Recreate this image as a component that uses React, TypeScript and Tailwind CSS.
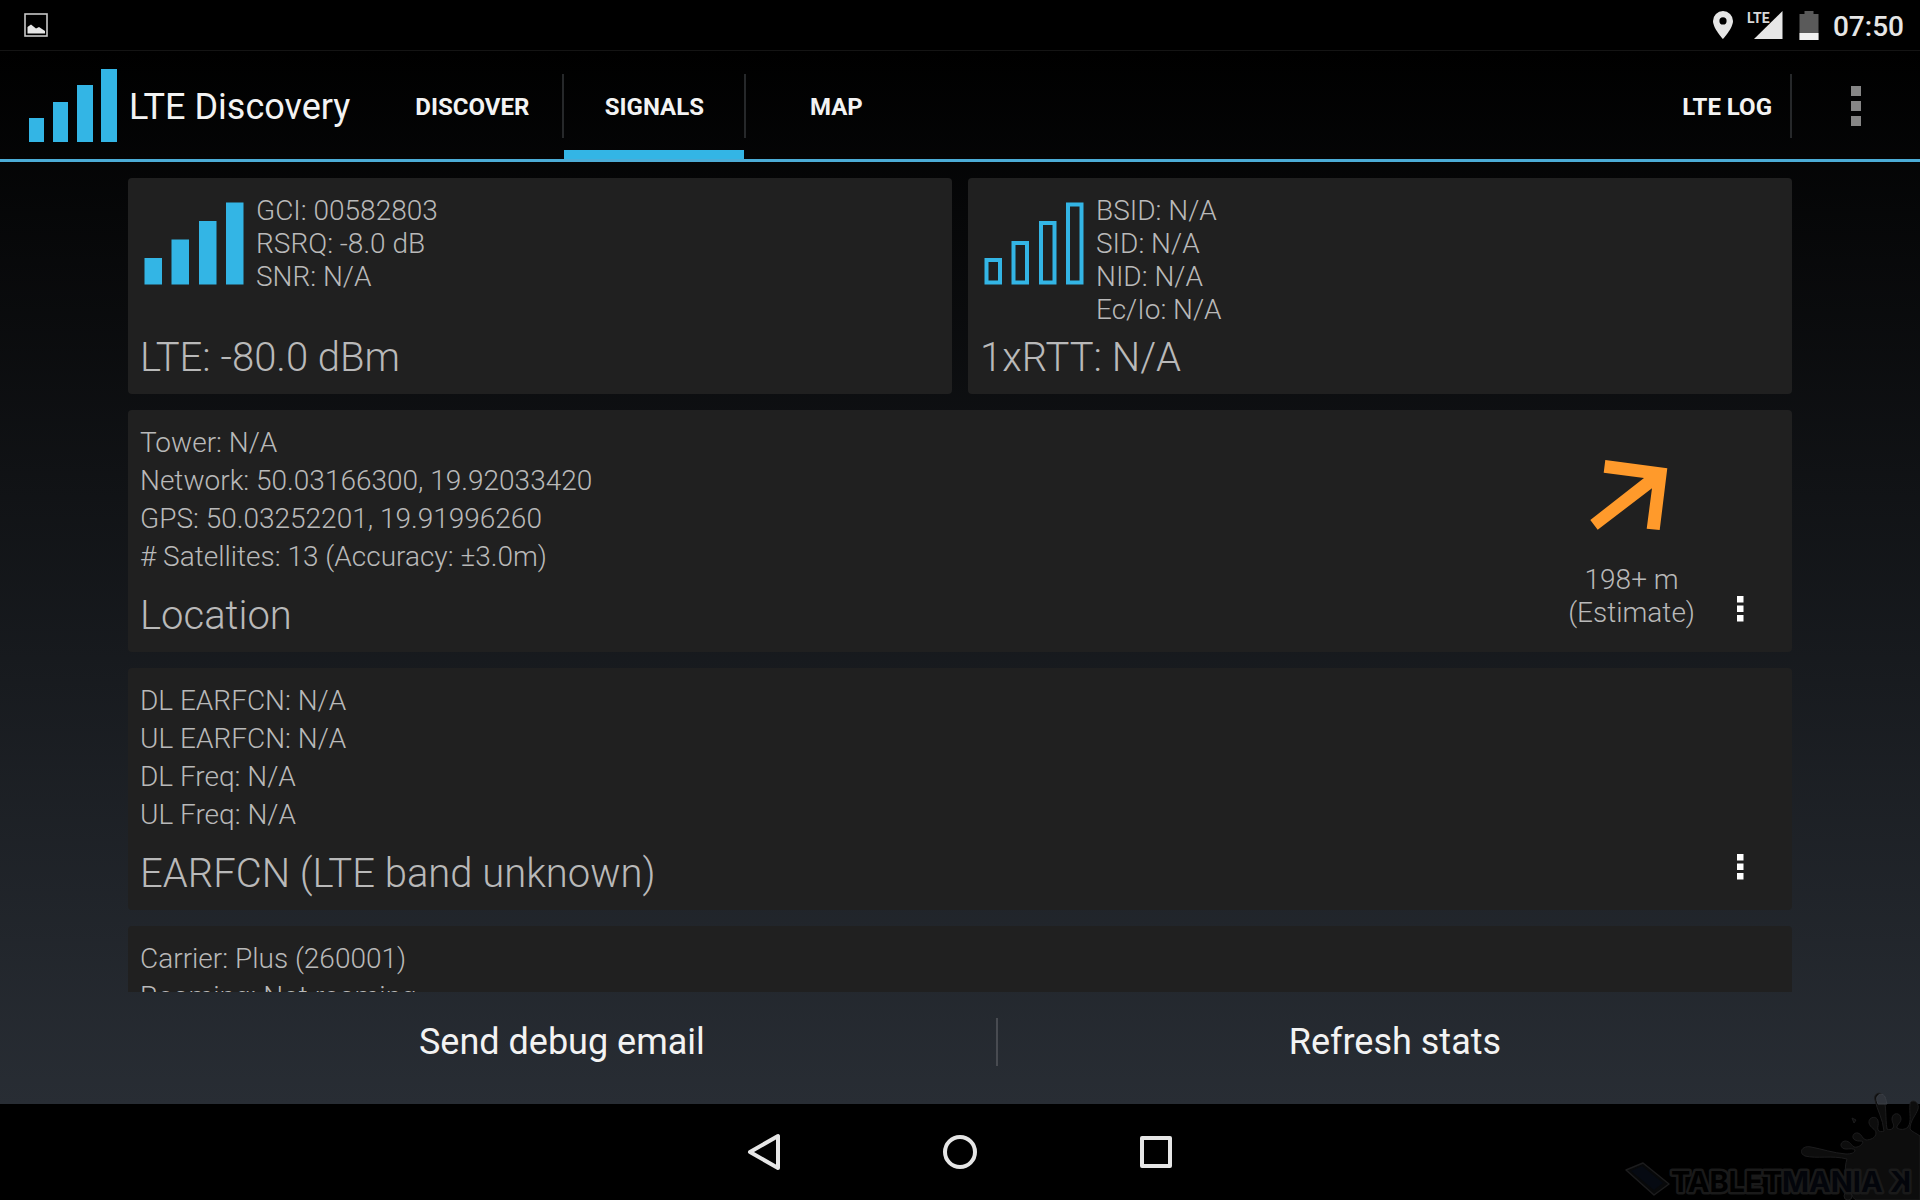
import type { ReactNode } from 'react'
import { clsx } from 'clsx'

const tabs = [
  { label: 'DISCOVER', active: false },
  { label: 'SIGNALS', active: true },
  { label: 'MAP', active: false },
]

const signals = [
  {
    title: 'LTE: -80.0 dBm',
    filled: true,
    lines: ['GCI: 00582803', 'RSRQ: -8.0 dB', 'SNR: N/A'],
  },
  {
    title: '1xRTT: N/A',
    filled: false,
    lines: ['BSID: N/A', 'SID: N/A', 'NID: N/A', 'Ec/Io: N/A'],
  },
]

function LogoBars() {
  return (
    <svg viewBox="0 0 88 73" className="h-[73px] w-[88px] shrink-0 fill-[#33b5e5]" aria-hidden="true">
      <rect x="0" y="49" width="15" height="24" />
      <rect x="24" y="33" width="15" height="40" />
      <rect x="48" y="16" width="16" height="57" />
      <rect x="72" y="0" width="16" height="73" />
    </svg>
  )
}

function SignalBars({ filled }: { filled: boolean }) {
  const bars = [
    { x: 0.5, y: 56 },
    { x: 27.5, y: filled ? 37.5 : 39 },
    { x: 55, y: 19 },
    { x: 82, y: 0.5 },
  ]
  return (
    <svg viewBox="0 0 100 83" className="h-[83px] w-[100px] shrink-0" aria-hidden="true">
      {bars.map((bar) =>
        filled ? (
          <rect key={bar.x} x={bar.x} y={bar.y} width="17.5" height={82.5 - bar.y} fill="#33b5e5" />
        ) : (
          <rect
            key={bar.x}
            x={bar.x + 2}
            y={bar.y + 2}
            width="13.5"
            height={78.5 - bar.y}
            fill="none"
            stroke="#33b5e5"
            strokeWidth="4"
          />
        ),
      )}
    </svg>
  )
}

function Card({ className, children }: { className?: string; children: ReactNode }) {
  return <section className={clsx('shrink-0 rounded bg-[#202020] px-3', className)}>{children}</section>
}

function CardMenu({ label }: { label: string }) {
  return (
    <button type="button" aria-label={label} className="mr-6 mb-[3px] flex h-14 w-8 items-center justify-center">
      <svg viewBox="0 0 7 26" className="h-[26px] w-[7px] fill-white">
        <rect width="6.5" height="6.5" />
        <rect y="9.5" width="6.5" height="6.5" />
        <rect y="19" width="6.5" height="6.5" />
      </svg>
    </button>
  )
}

function InfoCard({ title, lines, children }: { title: string; lines: string[]; children?: ReactNode }) {
  return (
    <Card className="flex justify-between pt-[14px] pb-3">
      <div>
        {lines.map((line) => (
          <p key={line} className="leading-[38px]">
            {line}
          </p>
        ))}
        <h2 className="mt-4 text-[40px] leading-[48px]">{title}</h2>
      </div>
      <div className="flex items-end">
        {children}
        <CardMenu label={`${title} options`} />
      </div>
    </Card>
  )
}

function StatusBar() {
  return (
    <div className="flex h-[51px] shrink-0 items-center justify-between border-b border-[#141414] bg-black pr-4 pl-6">
      <svg viewBox="0 0 24 24" className="size-6" role="img" aria-label="Screenshot saved">
        <rect x="1" y="1" width="22" height="22" fill="none" stroke="#c8c8c8" strokeWidth="1.6" />
        <path d="M3.500 20.500v-6.500l3.500-2.500 5 4 3-1.500 6 4v2.500z" fill="#e6e6e6" />
      </svg>
      <div className="flex items-center">
        <svg viewBox="0 0 20 28" className="mr-[14px] h-7 w-5" role="img" aria-label="Location on">
          <path
            d="M10 0a10 10 0 0 0-10 10c0 7.300 10 18 10 18s10-10.700 10-18a10 10 0 0 0-10-10zm0 13.500a3.600 3.600 0 1 1 0-7.200 3.600 3.600 0 0 1 0 7.200z"
            fill="#e6e6e6"
          />
        </svg>
        <svg viewBox="0 0 36 28" className="mr-4 h-7 w-9" role="img" aria-label="LTE signal">
          <path d="M35.500 0v28H7z" fill="#e6e6e6" />
          <path d="M0 0h20v11l-3 3H0z" fill="#000" />
          <text x="0" y="12" className="font-['Liberation_Sans_Narrow','Roboto',sans-serif] text-[14px] font-bold" fill="#d8d8d8">
            LTE
          </text>
        </svg>
        <svg viewBox="0 0 20 29" className="mr-[14px] h-[29px] w-5" role="img" aria-label="Battery">
          <path d="M5.500 0h9v3h5v26h-19V3h5z" fill="#5a5a5a" />
          <path d="M.5 22h19v7H.5z" fill="#f0f0f0" />
        </svg>
        <time className="pt-[3px] text-[28px] leading-8 font-medium text-[#e6e6e6]">07:50</time>
      </div>
    </div>
  )
}

function ActionBar() {
  return (
    <header className="flex h-[111px] shrink-0 items-stretch border-b-[3px] border-[#4bacd6]">
      <div className="flex items-center pl-[29px]">
        <LogoBars />
        <h1 className="ml-3 pt-1 text-[36px] leading-[48px] text-[#f3f3f3]">LTE Discovery</h1>
      </div>
      <nav className="ml-8 flex" aria-label="Sections">
        {tabs.map((tab, i) => (
          <div key={tab.label} className="flex">
            {i > 0 ? <span className="mt-[23px] h-16 w-0.5 bg-[#26282a]" /> : null}
            <a
              href={`#${tab.label.toLowerCase()}`}
              aria-current={tab.active ? 'page' : undefined}
              className={clsx(
                'flex w-[180px] items-center justify-center border-b-[9px] pt-3 text-[24px] font-bold text-[#f3f3f3]',
                tab.active ? 'border-[#33b5e5]' : 'border-transparent',
              )}
            >
              {tab.label}
            </a>
          </div>
        ))}
      </nav>
      <div className="ml-auto flex">
        <button type="button" className="px-[18px] pt-[3px] text-[24px] font-bold text-[#f3f3f3]">
          LTE LOG
        </button>
        <span className="mt-[23px] h-16 w-0.5 bg-[#26282a]" />
        <button type="button" aria-label="More options" className="flex w-32 items-center justify-center pt-0.5">
          <svg viewBox="0 0 10 40" className="h-10 w-[10px] fill-[#868686]">
            <rect width="10" height="10" />
            <rect y="15" width="10" height="10" />
            <rect y="30" width="10" height="10" />
          </svg>
        </button>
      </div>
    </header>
  )
}

function Watermark() {
  return (
    <svg
      viewBox="0 0 300 110"
      className="pointer-events-none absolute right-0 bottom-0 h-[110px] w-[300px]"
      role="img"
      aria-label="Tabletmaniak"
    >
      {/* ink splat with its drops */}
      <g fill="#0d0d0d" stroke="#1c1c1d" strokeWidth="1">
        <path
          d="M300 46c-4-3-8-4-10-7 0-8 6-14 8-20 2-7-7-11-8-5-1 9 2 17-2 23-3 3-8 3-11 1-1-3 4-5 4-9 0-7-9-7-9 0 0 4 3 6 1 9-2 2-4 2-6 1-2-12 0-22-4-33-2-5-10-3-8 4 2 10 8 19 9 31-2 1-5 1-6-1-1-3 1-5 0-9-1-6-10-4-9 2 1 5 7 6 7 10 0 5-6 7-10 7-4-1-4-6-8-7-5-1-7 5-3 7 3 2 7 0 8 2-1 3-5 6-9 5-3-2-4-6-9-6-6 1-5 8 1 8 4 0 7-1 9 1 0 3-4 4-9 4-13-1-24-5-35-7-9-2-13 6-6 9 12 3 27-1 42 3-3 9-2 20 3 29 2 5 1 9 6 12h64z"
        />
        <path d="M232 28l4 2-2 3z" />
        <circle cx="228" cy="106" r="4" />
      </g>
      <path d="M267 14c-1-3-1-5-2-7-2-5-10-3-8 4l1 3z" fill="#30343b" stroke="#3a3e45" strokeWidth="1" />

      {/* tilted tablet */}
      <g stroke="#1c1c1d" strokeWidth="1.500" strokeLinejoin="round">
        <path d="M6 80 23 73 49 94 34 105z" fill="#08090a" />
        <path d="M11 81 22 76 43 93 34 100z" fill="#060a12" stroke="none" />
      </g>

      <g
        className="font-['Inter','Liberation_Sans',sans-serif] text-[29px] font-bold"
        stroke="#1a1a1a"
        strokeWidth="5"
        strokeLinejoin="round"
        paintOrder="stroke"
      >
        <text x="51" y="102" fill="#000">
          TABLET<tspan fill="#03050b">MANIA</tspan>
        </text>
        <text x="-291" y="102" transform="scale(-1 1)" fill="#03050b">
          K
        </text>
      </g>
    </svg>
  )
}

export default function App() {
  return (
    <div className="relative flex h-dvh flex-col overflow-hidden bg-black font-['Roboto','Noto_Sans',sans-serif]">
      <StatusBar />
      <div className="flex min-h-0 flex-1 flex-col bg-linear-to-b/srgb from-black to-[#282d34]">
        <ActionBar />
        <main className="mx-32 flex min-h-0 flex-1 flex-col gap-4 overflow-hidden pt-4 text-[28px] font-light text-[#b9b9b9]">
          <div className="grid shrink-0 grid-cols-2 gap-4">
            {signals.map((signal) => (
              <Card key={signal.title} className="flex h-[216px] flex-col justify-between pt-4 pb-3">
                <div className="flex pl-1">
                  <div className="pt-2">
                    <SignalBars filled={signal.filled} />
                  </div>
                  <div className="pl-3">
                    {signal.lines.map((line) => (
                      <p key={line} className="leading-[33px]">
                        {line}
                      </p>
                    ))}
                  </div>
                </div>
                <h2 className="text-[40px] leading-[48px]">{signal.title}</h2>
              </Card>
            ))}
          </div>
          <InfoCard
            title="Location"
            lines={[
              'Tower: N/A',
              'Network: 50.03166300, 19.92033420',
              'GPS: 50.03252201, 19.91996260',
              '# Satellites: 13 (Accuracy: ±3.0m)',
            ]}
          >
            <div className="mr-7 flex flex-col items-center pr-px pb-[11px] text-center leading-[33px]">
              <svg viewBox="0 0 84 70" className="mb-[33px] h-[70px] w-[84px] fill-[#ff9a2b]" role="img" aria-label="Tower direction">
                <path d="M15.300 0 77.300 8.300 69.700 70 56.700 68.700 62 28.300 7.700 69.700.300 60 54 18 13.700 12.700z" />
              </svg>
              <p>198+ m</p>
              <p>(Estimate)</p>
            </div>
          </InfoCard>
          <InfoCard
            title="EARFCN (LTE band unknown)"
            lines={['DL EARFCN: N/A', 'UL EARFCN: N/A', 'DL Freq: N/A', 'UL Freq: N/A']}
          />
          <InfoCard title="Carrier" lines={['Carrier: Plus (260001)', 'Roaming: Not roaming']} />
        </main>
        <div className="mx-32 flex h-28 shrink-0 items-center pb-3 text-[36px] text-[#f3f3f3]">
          <button type="button" className="flex-auto">
            Send debug email
          </button>
          <span className="h-12 w-0.5 bg-[#484b51]" />
          <button type="button" className="flex-auto">
            Refresh stats
          </button>
        </div>
      </div>
      <nav className="flex h-24 shrink-0 items-center justify-center gap-[148px] bg-black" aria-label="System">
        <button type="button" aria-label="Back">
          <svg viewBox="0 0 48 48" className="size-12 fill-none stroke-[#e6e6e6]" strokeWidth="4" strokeLinejoin="round">
            <path d="M38 8v32L10 24z" />
          </svg>
        </button>
        <button type="button" aria-label="Home">
          <svg viewBox="0 0 48 48" className="size-12 fill-none stroke-[#e6e6e6]" strokeWidth="4">
            <circle cx="24" cy="24" r="15" />
          </svg>
        </button>
        <button type="button" aria-label="Recent apps">
          <svg viewBox="0 0 48 48" className="size-12 fill-none stroke-[#e6e6e6]" strokeWidth="4" strokeLinejoin="round">
            <path d="M10 10h28v28H10z" />
          </svg>
        </button>
      </nav>
      <Watermark />
    </div>
  )
}
